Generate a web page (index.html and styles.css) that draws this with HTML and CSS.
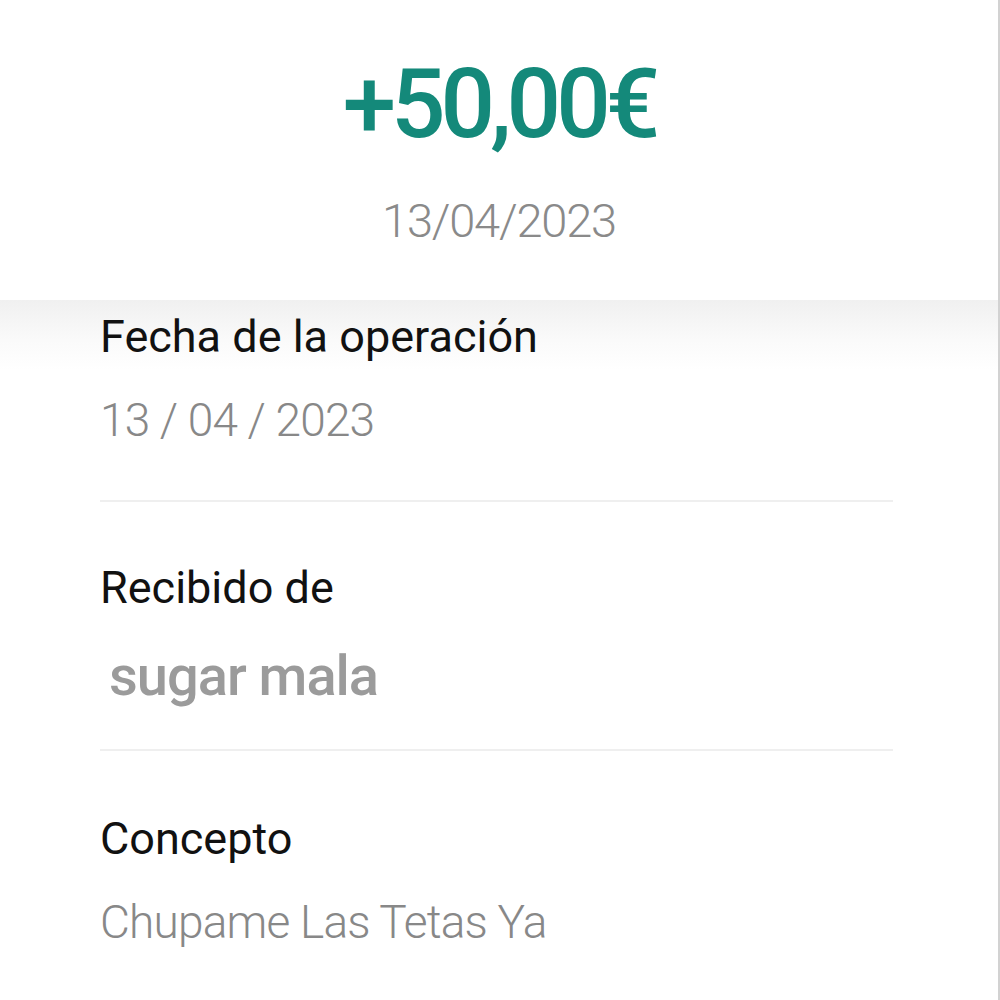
FILE: index.html
```html
<!DOCTYPE html>
<html lang="es">
<head>
    <meta charset="UTF-8">
    <meta name="viewport" content="width=device-width, initial-scale=1.0">
    <title>Detalle del movimiento</title>
    <link rel="stylesheet" href="styles.css">
</head>
<body>
    <div class="screen">
        <section class="summary">
            <p class="summary-title">Transferencia recibida</p>
            <p class="amount">+50,00€</p>
            <p class="summary-date">13/04/2023</p>
        </section>
        <section class="details">
            <div class="field">
                <h2 class="field-label">Fecha de la operación</h2>
                <p class="field-value">13 / 04 / 2023</p>
            </div>
            <div class="field field-sender">
                <h2 class="field-label">Recibido de</h2>
                <p class="field-value sender">sugar mala</p>
            </div>
            <div class="field field-last">
                <h2 class="field-label">Concepto</h2>
                <p class="field-value">Chupame Las Tetas Ya</p>
            </div>
        </section>
    </div>
</body>
</html>
```

FILE: styles.css
```css
* {
    box-sizing: border-box;
    margin: 0;
    padding: 0;
}

body {
    font-family: Roboto, "Liberation Sans", sans-serif;
    background-color: #ffffff;
    color: #111111;
    overflow: hidden;
}

.screen {
    width: 1000px;
    height: 1000px;
    border-right: 2px solid #d2d2d2;
    overflow: hidden;
}

/* top block with amount */
.summary {
    text-align: center;
    padding-bottom: 55px;
}

.summary-title {
    font-size: 44px;
    line-height: 44px;
    color: #c4c4c4;
    margin-top: -37px;
}

.amount {
    font-size: 96px;
    line-height: 96px;
    font-weight: 500;
    letter-spacing: -5px;
    color: #14897a;
    margin-top: 49px;
}

.summary-date {
    font-size: 47px;
    line-height: 49px;
    font-weight: 300;
    letter-spacing: -1.2px;
    color: #8a8a8a;
    margin-top: 44px;
}

/* list of fields */
.details {
    background: linear-gradient(to bottom, #f0f0f0 0px, #fafafa 40px, #ffffff 70px);
    padding: 9px 105px 0 100px;
}

.field {
    padding-bottom: 51px;
    border-bottom: 2px solid #efefef;
}

.field-sender {
    padding-top: 58px;
    padding-bottom: 37px;
}

.field-last {
    padding-top: 60px;
    border-bottom: none;
}

.field-label {
    font-size: 45px;
    line-height: 56px;
    font-weight: 400;
    color: #111111;
}

.field-value {
    font-size: 46px;
    line-height: 58px;
    font-weight: 300;
    letter-spacing: -0.8px;
    color: #888888;
    margin-top: 26px;
}

.sender {
    font-size: 56px;
    line-height: 72px;
    font-weight: 500;
    letter-spacing: -1px;
    color: #9b9b9b;
    padding-left: 9px;
    margin-top: 24px;
}
```
